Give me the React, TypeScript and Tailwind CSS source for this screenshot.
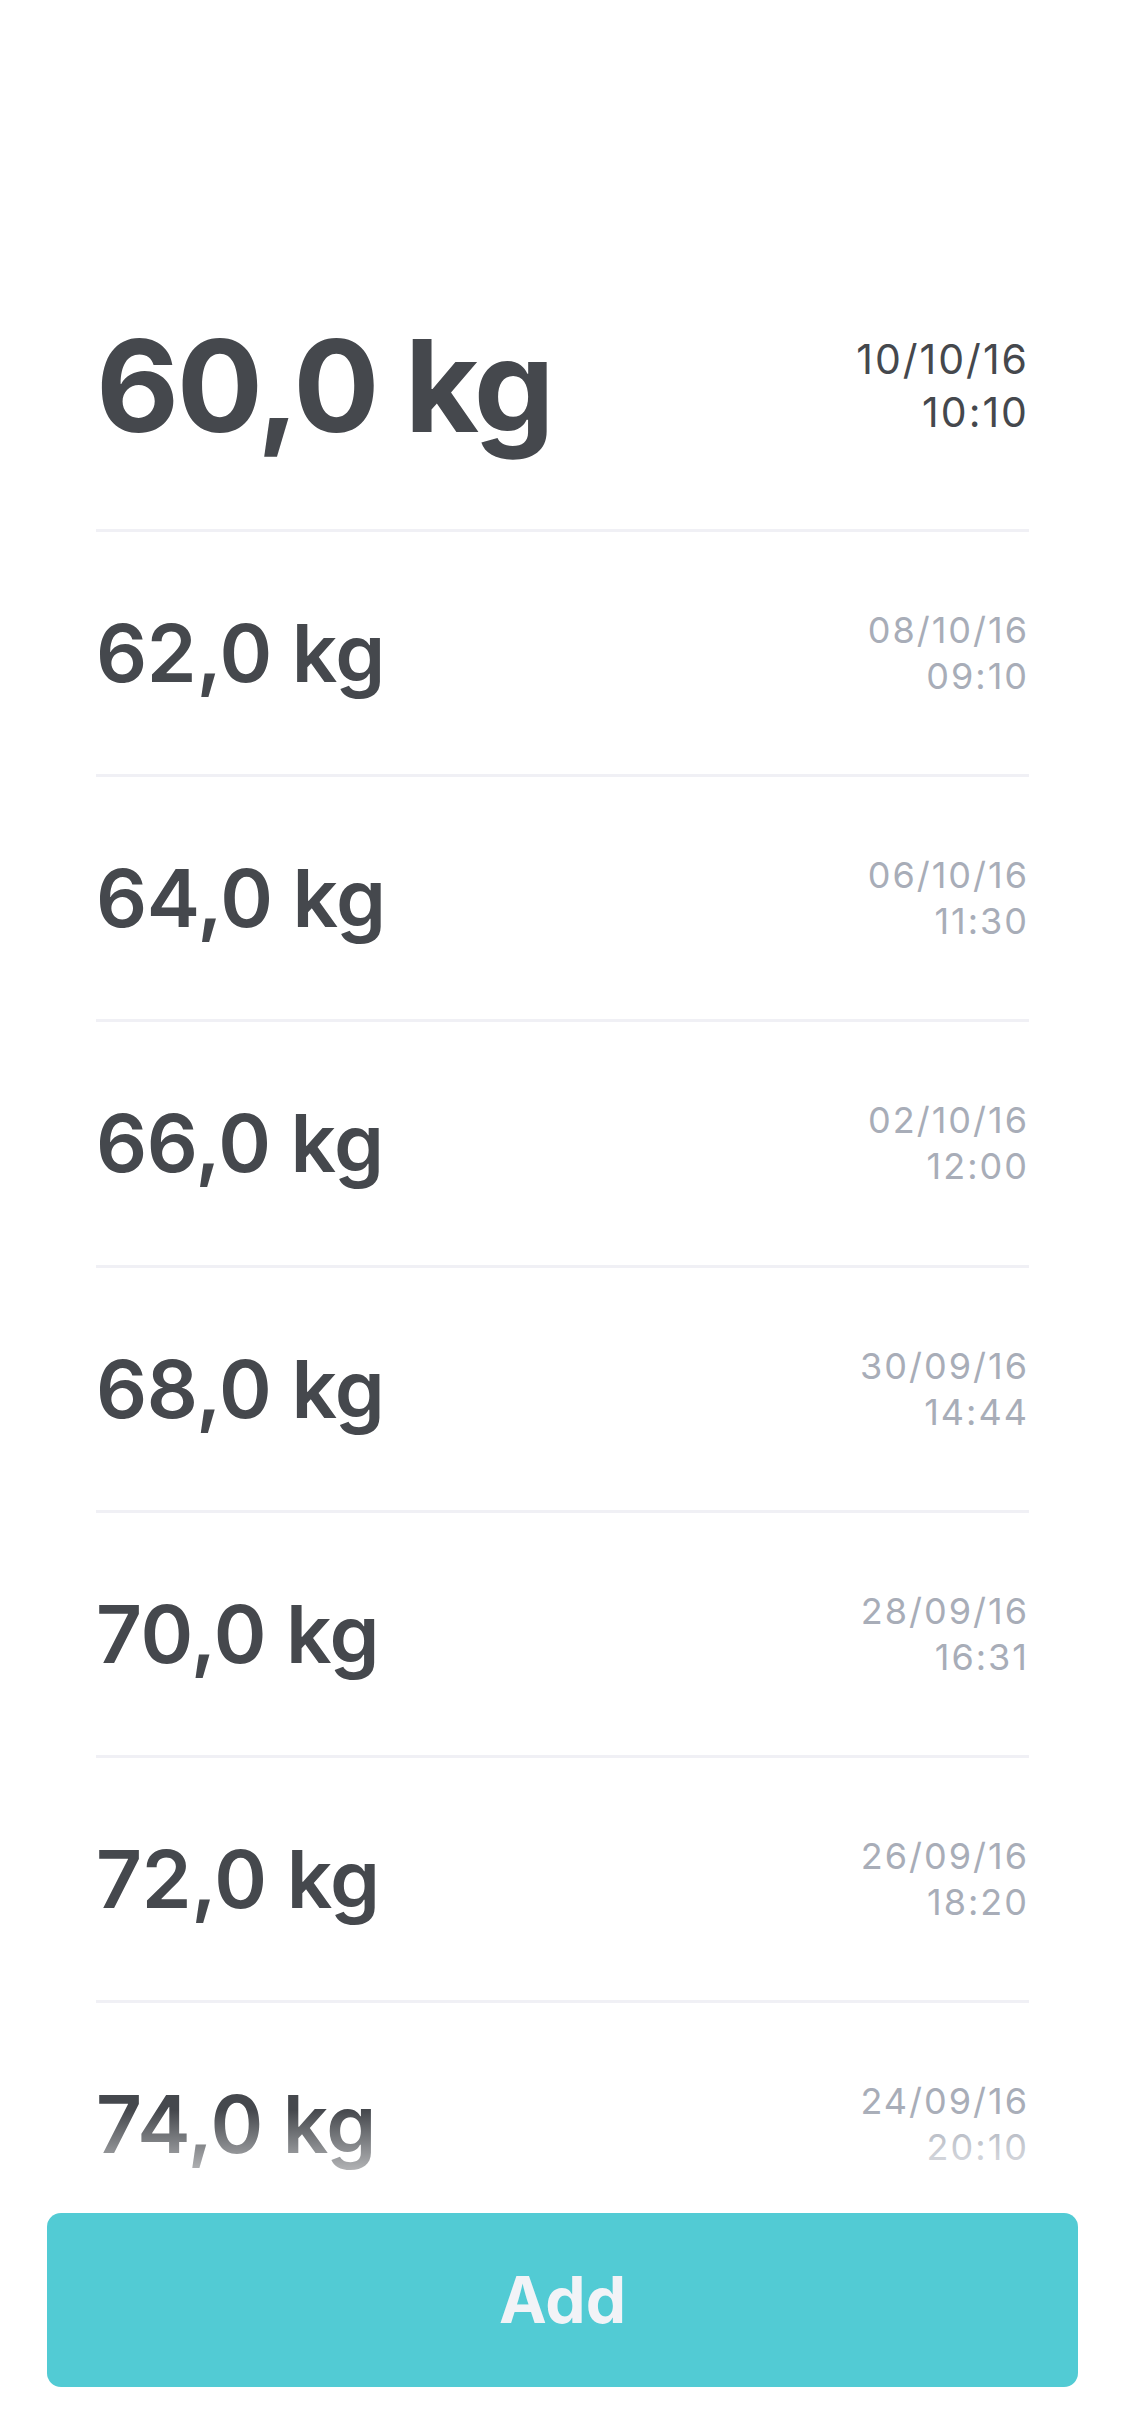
import React from "react";

const rows = [
  { w: "62,0 kg", d: "08/10/16", t: "09:10" },
  { w: "64,0 kg", d: "06/10/16", t: "11:30" },
  { w: "66,0 kg", d: "02/10/16", t: "12:00" },
  { w: "68,0 kg", d: "30/09/16", t: "14:44" },
  { w: "70,0 kg", d: "28/09/16", t: "16:31" },
  { w: "72,0 kg", d: "26/09/16", t: "18:20" },
  { w: "74,0 kg", d: "24/09/16", t: "20:10" },
];

export default function App() {
  return (
    <div
      className="relative h-[2436px] w-[1125px] overflow-hidden bg-white"
      style={{ fontFamily: "Inter, 'Noto Sans', sans-serif" }}
    >
      <div className="px-[96px] pt-[243px]">
        <div className="flex h-[286px] items-center justify-between">
          <div className="text-[128px] font-bold leading-none tracking-[-2.5px] text-[#45484d]">
            60,0 kg
          </div>
          <div className="text-right text-[41px] leading-[53px] tracking-[2px] text-[#45484d]">
            <div>10/10/16</div>
            <div>10:10</div>
          </div>
        </div>
        {rows.map((r) => (
          <div
            key={r.w}
            className="flex h-[245.2px] items-center justify-between border-t-[3px] border-[#f0f0f5]"
          >
            <div className="text-[80px] font-semibold leading-none tracking-[-0.3px] text-[#45484d]">
              {r.w}
            </div>
            <div className="text-right text-[36px] leading-[46px] tracking-[2px] text-[#a8adb8]">
              <div>{r.d}</div>
              <div>{r.t}</div>
            </div>
          </div>
        ))}
      </div>

      <div className="absolute bottom-0 left-0 right-0">
        <div className="h-[103px] bg-gradient-to-b from-white/0 to-white" />
        <div className="bg-white px-[47px] pb-[49px]">
          <div className="flex h-[174px] items-center justify-center rounded-[14px] bg-[#52cbd4]">
            <span className="text-[64px] font-bold text-[#f2f3f7]">Add</span>
          </div>
        </div>
      </div>
    </div>
  );
}
